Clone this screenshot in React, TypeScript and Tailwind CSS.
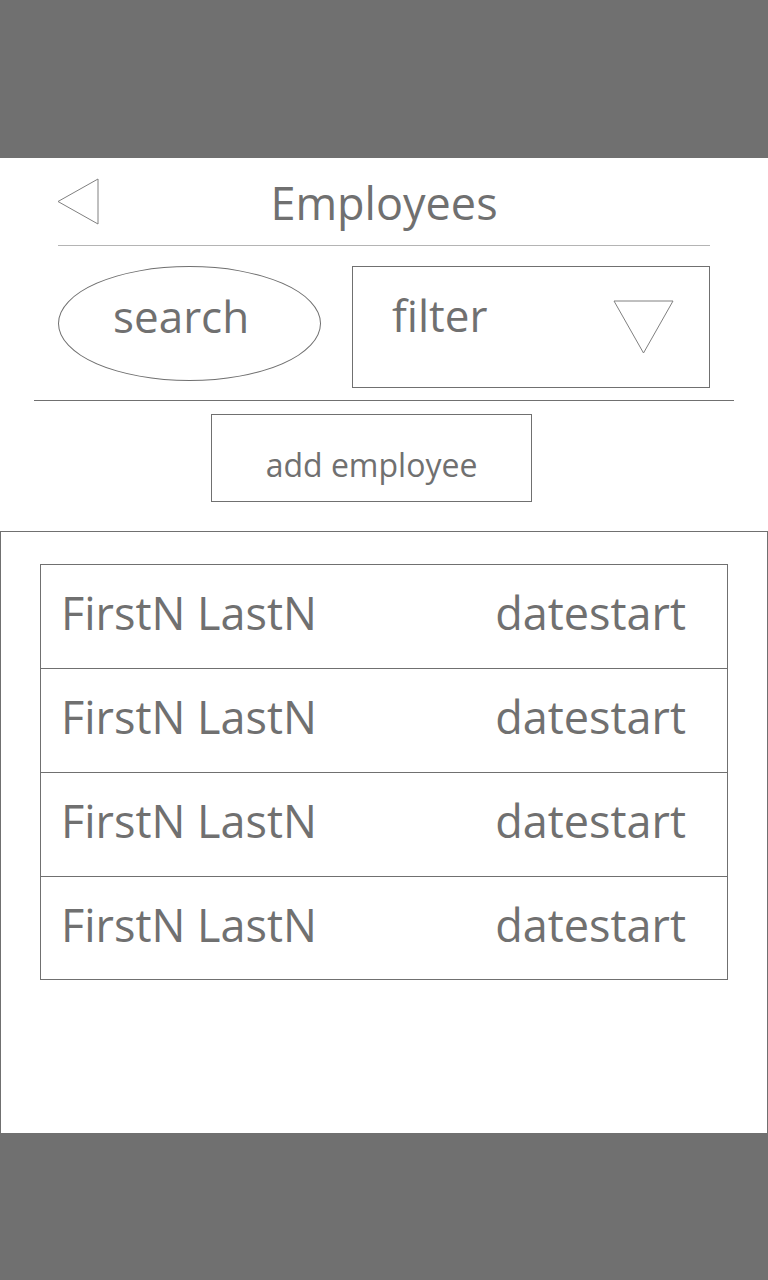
const rows = [
  { name: 'FirstN LastN', start: 'datestart' },
  { name: 'FirstN LastN', start: 'datestart' },
  { name: 'FirstN LastN', start: 'datestart' },
  { name: 'FirstN LastN', start: 'datestart' },
];

export default function App() {
  return (
    <div
      className="flex min-h-screen flex-col bg-[#707070] text-[#707070]"
      style={{ fontFamily: '"Open Sans", "Noto Sans", sans-serif' }}
    >
      {/* top bar */}
      <div className="h-[158px] shrink-0" />

      <main className="flex h-[975px] shrink-0 flex-col bg-white">
        {/* Header */}
        <div className="mx-[58px] grid h-[88px] grid-cols-[40px_1fr_40px] items-center border-b border-[#b4b4b4]">
          <svg width="42" height="47" viewBox="0 0 42 47" className="-ml-px">
            <polygon points="41,1 1,23.5 41,46" fill="none" stroke="#808080" strokeWidth="1" />
          </svg>
          <h1 className="pt-[2px] text-center text-[45px] leading-[45px]">Employees</h1>
          <div />
        </div>

        {/* Search + filter */}
        <div className="mx-[58px] mt-[20px] flex items-start gap-[31px]">
          <div className="flex h-[115px] w-[263px] items-start rounded-[50%] border border-[#707070] pl-[54px] pt-[27px]">
            <span className="text-[44px] leading-[44px]">search</span>
          </div>
          <div className="flex h-[122px] w-[358px] items-start justify-between border border-[#707070] pl-[39px] pr-[35px]">
            <span className="mt-[26px] text-[44px] leading-[44px]">filter</span>
            <svg width="61" height="54" viewBox="0 0 61 54" className="mt-[33px]">
              <polygon points="1,1 60,1 30.5,53" fill="none" stroke="#808080" strokeWidth="1" />
            </svg>
          </div>
        </div>

        <div className="mx-[34px] mt-[12px] border-t border-[#707070]" />

        {/* Add employee */}
        <button className="ml-[211px] mt-[13px] flex h-[88px] w-[321px] items-start justify-center border border-[#707070] pt-[34px]">
          <span className="text-[32px] leading-[32px]">add employee</span>
        </button>

        {/* Employee list */}
        <div className="mt-[29px] flex-1 border border-b-0 border-[#707070] px-[39px] pt-[32px]">
          <div className="border border-[#707070]">
            {rows.map((row, i) => {
              const last = i === rows.length - 1;
              return (
                <div
                  key={i}
                  className={`flex items-center justify-between pb-[8px] pl-[20px] pr-[41px] ${
                    last ? 'h-[102px]' : 'h-[104px] border-b-[1.5px] border-[#707070]'
                  }`}
                >
                  <span className="text-[45px] leading-[45px]">{row.name}</span>
                  <span className="text-[45px] leading-[45px]">{row.start}</span>
                </div>
              );
            })}
          </div>
        </div>
      </main>

      {/* bottom bar */}
      <div className="flex-1" />
    </div>
  );
}
